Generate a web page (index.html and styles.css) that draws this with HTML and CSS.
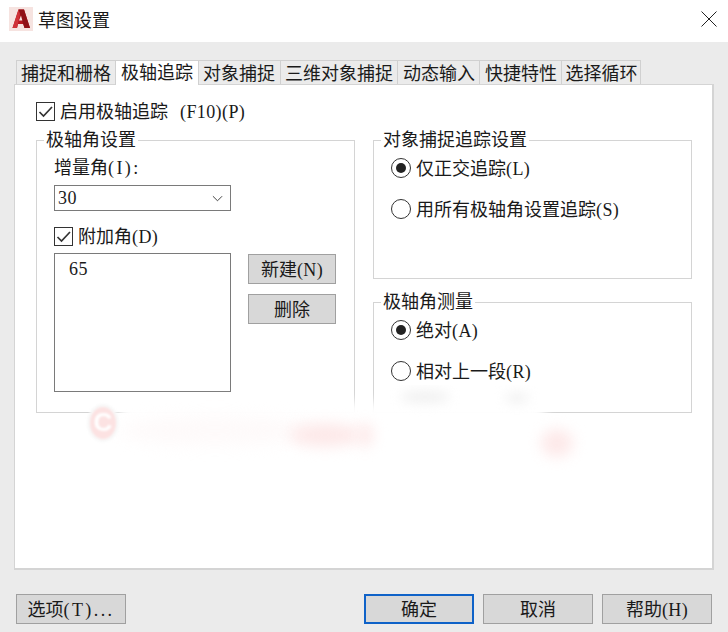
FILE: index.html
```html
<!DOCTYPE html>
<html>
<head>
    <title>草图设置</title>
    <link rel="stylesheet" href="styles.css">
</head>
<body>
    <div class="dialog">
        <div class="titlebar">
            <svg class="app-icon" viewBox="0 0 24 24">
                <rect width="24" height="24" fill="#f6e3e0"/>
                <path d="M3.5 21 L9.5 2.5 L15 2.5 L21 21 L15.5 21 L14.3 17 L9 17 L8 21 Z" fill="#b5171f"/>
                <path d="M9.5 2.5 L15 2.5 L21 21 L15.5 21 Z" fill="#8f1117"/>
                <path d="M3.5 21 L9.5 2.5 L11 7 L8 21 Z" fill="#cf3238"/>
                <path d="M10 13.5 L12 8.5 L13.3 13.5 Z" fill="#f6e3e0"/>
            </svg>
            <span class="title">草图设置</span>
            <svg class="close" viewBox="0 0 16 16">
                <path d="M0.5 0.5 L15.5 15.5 M15.5 0.5 L0.5 15.5" stroke="#222" stroke-width="1" fill="none"/>
            </svg>
        </div>

        <div class="content">
            <div class="tabs">
                <div class="tab">捕捉和栅格</div>
                <div class="tab active">极轴追踪</div>
                <div class="tab">对象捕捉</div>
                <div class="tab wide">三维对象捕捉</div>
                <div class="tab">动态输入</div>
                <div class="tab">快捷特性</div>
                <div class="tab">选择循环</div>
            </div>

            <div class="panel">
                <label class="check top-check">
                    <span class="box"><svg viewBox="0 0 17 17"><path d="M2.5 9 L6.5 13 L15 4" /></svg></span>
                    <span>启用极轴追踪<span class="lat fkey">(F10)(P)</span></span>
                </label>

                <div class="columns">
                    <fieldset class="group left">
                        <legend>极轴角设置</legend>
                        <div class="field-label">增量角<span class="lat dots">(I):</span></div>
                        <div class="select">
                            <span class="lat">30</span>
                            <svg viewBox="0 0 12 7"><path d="M1 1 L6 6 L11 1" /></svg>
                        </div>
                        <label class="check add-check">
                            <span class="box"><svg viewBox="0 0 17 17"><path d="M2.5 9 L6.5 13 L15 4" /></svg></span>
                            <span>附加角<span class="lat">(D)</span></span>
                        </label>
                        <div class="list-row">
                            <div class="listbox"><span class="lat">65</span></div>
                            <div class="list-btns">
                                <div class="btn small">新建<span class="lat">(N)</span></div>
                                <div class="btn small">删除</div>
                            </div>
                        </div>
                    </fieldset>

                    <div class="right-col">
                        <fieldset class="group track">
                            <legend>对象捕捉追踪设置</legend>
                            <div class="radio"><span class="dot on"></span><span>仅正交追踪<span class="lat">(L)</span></span></div>
                            <div class="radio"><span class="dot"></span><span>用所有极轴角设置追踪<span class="lat">(S)</span></span></div>
                        </fieldset>
                        <fieldset class="group measure">
                            <legend>极轴角测量</legend>
                            <div class="radio"><span class="dot on"></span><span>绝对<span class="lat">(A)</span></span></div>
                            <div class="radio"><span class="dot"></span><span>相对上一段<span class="lat">(R)</span></span></div>
                        </fieldset>
                    </div>
                </div>

                <!-- watermark smudge over the lower edge of the groups -->
                <div class="smudge">
                    <div class="blur wash"></div>
                    <div class="blur trail"></div>
                    <div class="blur pink p1"></div>
                    <div class="blur pink p2"></div>
                    <div class="blur pink p3"></div>
                    <div class="blur grey g1"></div>
                    <div class="blur grey g2"></div>
                    <div class="mark">C</div>
                </div>
            </div>

            <div class="footer">
                <div class="btn">选项<span class="lat dots">(T)...</span></div>
                <div class="footer-right">
                    <div class="btn default">确定</div>
                    <div class="btn">取消</div>
                    <div class="btn">帮助<span class="lat">(H)</span></div>
                </div>
            </div>
        </div>
    </div>
</body>
</html>
```

FILE: styles.css
```css
* {
    box-sizing: border-box;
}

html, body {
    margin: 0;
    padding: 0;
}

body {
    font-family: "Noto Sans CJK SC", "Liberation Serif", sans-serif;
    font-size: 18px;
    line-height: 24px;
    color: #1a1a1a;
    background: #ebebeb;
}

.lat {
    font-family: "Liberation Serif", "Noto Sans CJK SC", serif;
    font-size: 18px;
    letter-spacing: 0.4px;
}

.lat.dots {
    letter-spacing: 2.4px;
}

.lat.fkey {
    margin-left: 12px;
}

.dialog {
    width: 728px;
    height: 632px;
    display: flex;
    flex-direction: column;
    overflow: hidden;
}

.titlebar {
    height: 42px;
    background: #fff;
    display: flex;
    align-items: center;
    padding: 0 11px 4px 9px;
}

.app-icon {
    width: 24px;
    height: 24px;
    margin-right: 5px;
}

.title {
    font-size: 18px;
    flex: 1;
}

.close {
    width: 16px;
    height: 16px;
}

.content {
    flex: 1;
    padding: 18px 14px 0 14px;
    display: flex;
    flex-direction: column;
}

.tabs {
    display: flex;
    height: 25px;
    padding: 0 0 0 2px;
    position: relative;
    z-index: 1;
}

.tab {
    width: 82px;
    height: 24px;
    border: 1px solid #d0d0d0;
    border-right: none;
    border-bottom: none;
    text-align: center;
    line-height: 22px;
    background: #ebebeb;
}

.tab:first-child {
    width: 99px;
}

.tab.wide {
    width: 117px;
}

.tab.wide ~ .tab {
    padding-left: 1px;
}

.tab:last-child {
    width: 80px;
    padding-left: 5px;
    border-right: 1px solid #d0d0d0;
}

.tab.active {
    width: 84px;
    height: 25px;
    line-height: 20px;
    background: #fff;
    border: 1px solid #d0d0d0;
    border-bottom: none;
}

.tab.active + .tab {
    width: 81px;
    border-left: none;
    padding-right: 1px;
}

.panel {
    position: relative;
    height: 486px;
    margin-top: -1px;
    background: #fff;
    border: 2px solid #d4d4d4;
    border-width: 1px 2px 2px 1px;
    padding: 16px 20px 0 21px;
}

.check {
    display: flex;
    align-items: center;
    gap: 5px;
}

.box {
    width: 19px;
    height: 19px;
    border: 1px solid #333;
    background: #fff;
    display: block;
}

.box svg {
    display: block;
    width: 17px;
    height: 17px;
}

.box path {
    fill: none;
    stroke: #333;
    stroke-width: 1.7;
}

.top-check {
    height: 20px;
}

.columns {
    display: flex;
    justify-content: space-between;
    margin-top: 7px;
}

.group {
    margin: 0;
    padding: 0;
    min-width: 0;
    border: 1px solid #d4d4d4;
    width: 319px;
}

.group legend {
    padding: 0 2px 3px;
    line-height: 21px;
    font-size: 18px;
}

.group.left {
    height: 285px;
    padding: 0 17px;
}

.group.left legend {
    margin-left: -10px;
}

.right-col {
    display: flex;
    flex-direction: column;
    gap: 11px;
    width: 319px;
}

.group.track {
    height: 151px;
    padding: 4px 17px 0;
}

.group.measure {
    height: 123px;
    padding: 4px 17px 0;
}

.track legend,
.measure legend {
    margin-left: -10px;
}

.radio {
    display: flex;
    align-items: center;
    height: 24px;
    margin-bottom: 17px;
}

.dot {
    position: relative;
    width: 20px;
    height: 20px;
    border: 1px solid #333;
    border-radius: 50%;
    margin-right: 5px;
    flex: none;
}

.dot.on::after {
    content: "";
    position: absolute;
    left: 4px;
    top: 4px;
    width: 10px;
    height: 10px;
    border-radius: 50%;
    background: #222;
}

.field-label {
    height: 24px;
    margin-top: 2px;
}

.select {
    width: 177px;
    height: 26px;
    margin-top: 7px;
    border: 1px solid #7a7a7a;
    background: #fff;
    display: flex;
    align-items: center;
    justify-content: space-between;
    padding: 0 7px 0 3px;
}

.select svg {
    width: 11px;
    height: 7px;
}

.select path {
    fill: none;
    stroke: #333;
    stroke-width: 1;
}

.add-check {
    margin-top: 15px;
    height: 20px;
}

.list-row {
    display: flex;
    margin-top: 7px;
}

.listbox {
    width: 177px;
    height: 139px;
    border: 1px solid #7a7a7a;
    padding: 1px 14px;
}

.list-btns {
    margin: 1px 0 0 17px;
    display: flex;
    flex-direction: column;
    gap: 10px;
}

.btn {
    width: 110px;
    height: 30px;
    background: #d8d8d8;
    border: 1px solid #a0a0a0;
    text-align: center;
    line-height: 26px;
}

.btn.small {
    width: 88px;
}

.btn.default {
    border: 2px solid #0f62c8;
    line-height: 24px;
}

.footer {
    display: flex;
    justify-content: space-between;
    margin-top: 24px;
    padding-left: 2px;
    margin-right: 2px;
}

.footer-right {
    display: flex;
    gap: 9px;
}

.smudge {
    position: absolute;
    left: 0;
    top: 300px;
    width: 696px;
    height: 100px;
    overflow: hidden;
}

.blur {
    position: absolute;
}

.wash {
    left: 105px;
    top: 17px;
    width: 425px;
    height: 44px;
    background: #fff;
    filter: blur(6px);
}

.trail {
    left: 105px;
    top: 32px;
    width: 190px;
    height: 28px;
    border-radius: 50%;
    background: #fefafa;
    filter: blur(8px);
}

.pink {
    border-radius: 50%;
    background: #fde9e9;
    filter: blur(7px);
}

.p1 {
    left: 275px;
    top: 38px;
    width: 70px;
    height: 24px;
}

.p2 {
    left: 342px;
    top: 38px;
    width: 16px;
    height: 24px;
}

.p3 {
    left: 526px;
    top: 44px;
    width: 32px;
    height: 28px;
}

.grey {
    border-radius: 50%;
    background: #f0f0f0;
    filter: blur(6px);
}

.g1 {
    left: 385px;
    top: 6px;
    width: 50px;
    height: 12px;
}

.g2 {
    left: 490px;
    top: 8px;
    width: 24px;
    height: 10px;
}

.mark {
    position: absolute;
    left: 72px;
    top: 19px;
    width: 32px;
    height: 38px;
    border-radius: 50%;
    background: #fce2e2;
    border: 3px solid #f8f8f8;
    color: #fff;
    font-family: "Liberation Sans", sans-serif;
    font-weight: bold;
    font-size: 26px;
    line-height: 30px;
    text-align: center;
    filter: blur(1.2px);
}
```
